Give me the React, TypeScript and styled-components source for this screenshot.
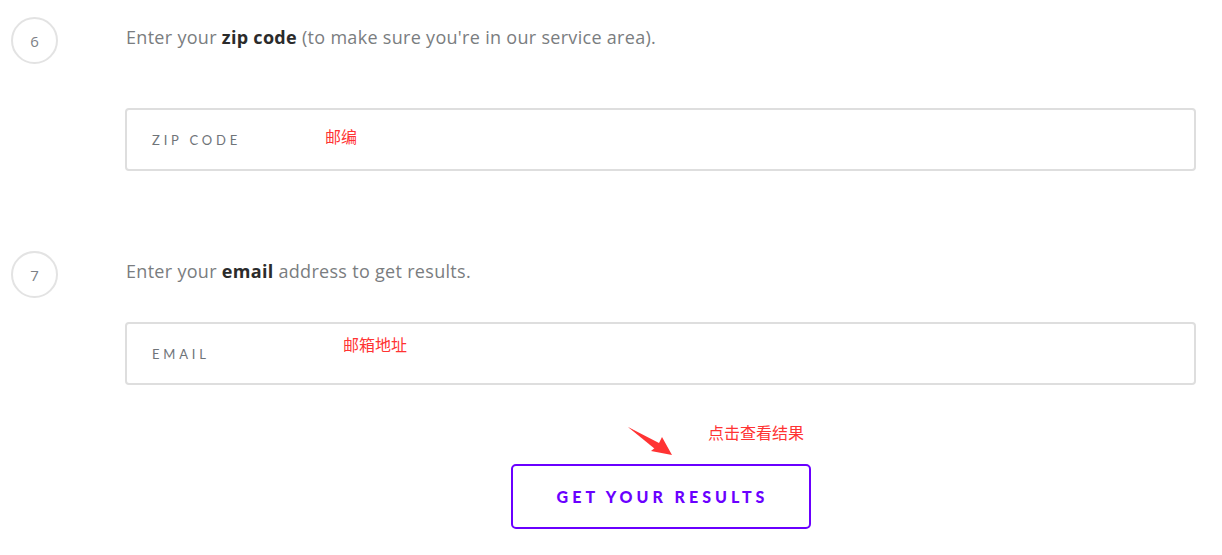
import React from "react";
import styled, { createGlobalStyle } from "styled-components";

const GlobalStyle = createGlobalStyle`
  html, body { margin: 0; padding: 0; background: #ffffff; }
  body { font-family: "Open Sans", "Lato", sans-serif; }
`;

const Page = styled.div`
  width: 1222px;
  height: 555px;
  position: relative;
  overflow: hidden;
  background: #fff;
`;

const Step = styled.section<{ $top: number }>`
  display: grid;
  grid-template-columns: 125px 1071px;
  padding-top: ${(p) => p.$top}px;
`;

const Badge = styled.div`
  margin-left: 11px;
  width: 47px;
  height: 47px;
  box-sizing: border-box;
  border: 2px solid #e3e3e3;
  border-radius: 50%;
  display: flex;
  align-items: center;
  justify-content: center;
  font-family: "Open Sans", sans-serif;
  font-size: 15px;
  color: #7d8186;
`;

const Body = styled.div`
  display: flex;
  flex-direction: column;
`;

const Prompt = styled.p<{ $shift: number }>`
  margin: ${(p) => p.$shift}px 0 0 1px;
  font-family: "Open Sans", "Lato", sans-serif;
  font-size: 18px;
  line-height: 24px;
  letter-spacing: 0.3px;
  color: #7a7d80;
  b { color: #2b2b2b; font-weight: 700; }
`;

const Field = styled.div<{ $gap: number }>`
  position: relative;
  margin-top: ${(p) => p.$gap}px;
  height: 63px;
  box-sizing: border-box;
  border: 2px solid #dedede;
  border-radius: 4px;
  display: flex;
  align-items: center;
  padding-left: 25px;
`;

const Label = styled.span`
  font-family: "Lato", sans-serif;
  font-size: 13px;
  letter-spacing: 3.8px;
  color: #6f7479;
`;

const Note = styled.span<{ $x: number; $y: number }>`
  position: absolute;
  left: ${(p) => p.$x}px;
  top: ${(p) => p.$y}px;
  font-family: "Noto Sans CJK SC", sans-serif;
  font-size: 16px;
  line-height: 18px;
  color: #ff3333;
  white-space: nowrap;
`;

const Actions = styled.div`
  display: grid;
  grid-template-columns: 125px 1071px;
  padding-top: 79px;
`;

const Center = styled.div`
  grid-column: 2;
  display: flex;
  justify-content: center;
  position: relative;
`;

const Button = styled.button`
  width: 300px;
  height: 65px;
  box-sizing: border-box;
  border: 2px solid #6a00ff;
  border-radius: 5px;
  background: #fff;
  color: #6a00ff;
  font-family: "Lato", sans-serif;
  font-weight: 900;
  font-size: 16px;
  letter-spacing: 4px;
  padding: 0 0 0 4px;
  cursor: pointer;
`;

const Arrow = styled.svg`
  position: absolute;
  left: 503px;
  top: -37px;
  overflow: visible;
`;

export default function App() {
  return (
    <>
      <GlobalStyle />
      <Page>
        <Step $top={17}>
          <Badge>6</Badge>
          <Body>
            <Prompt $shift={8}>
              Enter your <b>zip code</b> (to make sure you're in our service area).
            </Prompt>
            <Field $gap={59}>
              <Label>ZIP CODE</Label>
              <Note $x={198} $y={17}>邮编</Note>
            </Field>
          </Body>
        </Step>
        <Step $top={80}>
          <Badge>7</Badge>
          <Body>
            <Prompt $shift={8}>
              Enter your <b>email</b> address to get results.
            </Prompt>
            <Field $gap={39}>
              <Label>EMAIL</Label>
              <Note $x={216} $y={11}>邮箱地址</Note>
            </Field>
          </Body>
        </Step>
        <Actions>
          <Center>
            <Arrow width="50" height="35" viewBox="0 0 50 35">
              <polygon points="0,0 30,18 27,22 0,0" fill="#ff3333" />
              <polygon points="0,0 31,16 34,10 44,28 23,24 28,20" fill="#ff3333" />
            </Arrow>
            <Note $x={583} $y={-41}>点击查看结果</Note>
            <Button>GET YOUR RESULTS</Button>
          </Center>
        </Actions>
      </Page>
    </>
  );
}
